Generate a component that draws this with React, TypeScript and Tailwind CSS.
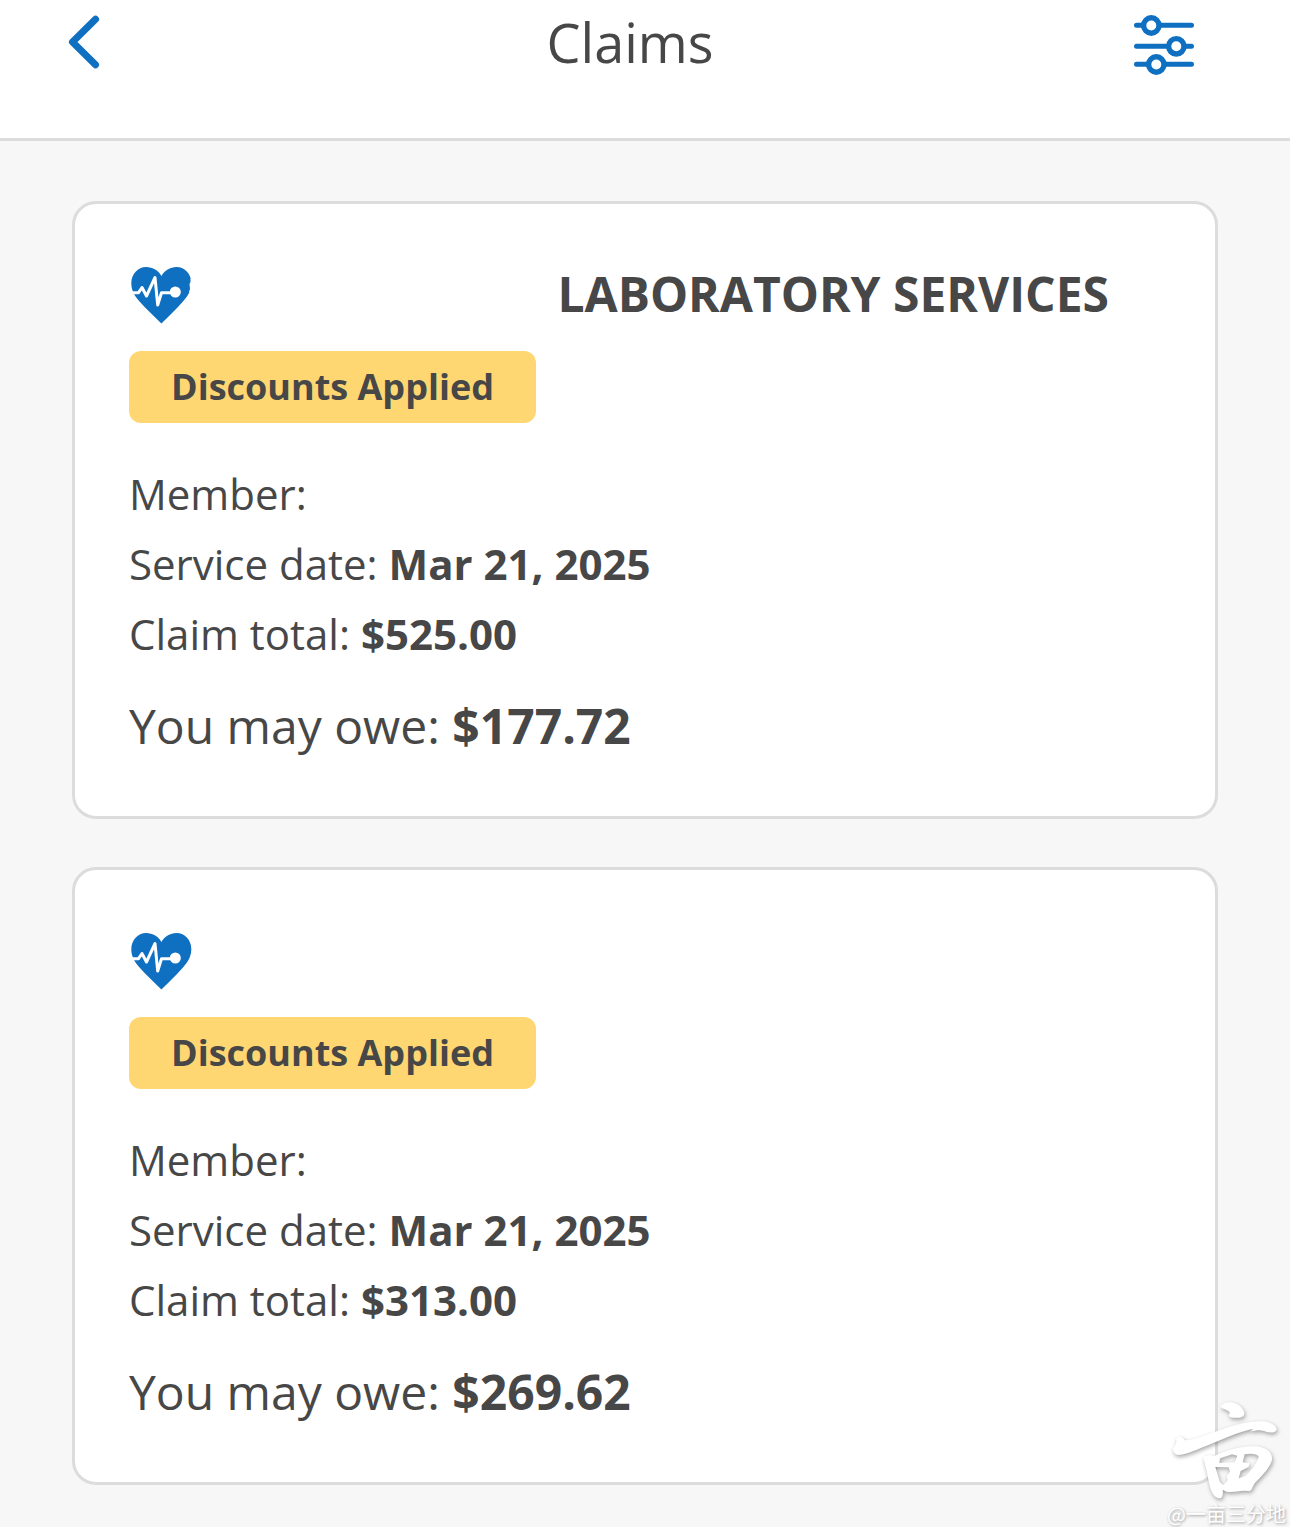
import * as React from "react";

type Claim = {
  id: string;
  title: string;
  serviceDate: string;
  total: string;
  owed: string;
  chipped?: boolean;
};

const CLAIMS: Claim[] = [
  { id: "lab", title: "LABORATORY SERVICES", serviceDate: "Mar 21, 2025", total: "$525.00", owed: "$177.72", chipped: true },
  { id: "other", title: "", serviceDate: "Mar 21, 2025", total: "$313.00", owed: "$269.62" },
];

function BackIcon() {
  return (
    <svg className="w-[60px] h-[66px]" viewBox="0 0 60 66" fill="none" aria-hidden="true">
      <path d="M29.5 10.3L6.5 33L29.5 55.7" stroke="#0f6fc0" strokeWidth="7" strokeLinecap="round" strokeLinejoin="round" />
    </svg>
  );
}

function FilterIcon() {
  return (
    <svg className="w-[60px] h-[66px]" viewBox="0 0 60 66" fill="none" stroke="#0f6fc0" aria-hidden="true">
      <path d="M2.5 16.3H57.5M2.5 37.3H57.5M2.5 55.3H57.5" strokeWidth="5" strokeLinecap="round" />
      <g fill="#fff" strokeWidth="5.4">
        <circle cx="17.3" cy="16.5" r="7.7" />
        <circle cx="42.3" cy="37.3" r="7.7" />
        <circle cx="22.3" cy="55.5" r="7.7" />
      </g>
    </svg>
  );
}

function HeartIcon({ chipped }: { chipped?: boolean }) {
  return (
    <svg className="w-[64px] h-[60px] shrink-0" viewBox="0 0 64 60" fill="none" aria-hidden="true">
      <path
        d="M32.4 59.5C25 52 17 45 11 38C5 31.5 2.3 26 2.3 19C2.3 10 9 3 17 3C24 3 29.5 6.5 32.4 12C35.5 6.5 41 3 47.5 3C56 3 62.3 10 62.3 19C62.3 26 59.500 31.5 53.5 38C47.5 45 40 52 32.4 59.5Z"
        fill="#0f6fc0"
      />
      <path d="M3 28.7H9.5L13 23.5L17.5 32L26 13.5L28.7 41L32.5 28.7H42" stroke="#fff" strokeWidth="3" strokeLinejoin="round" />
      <circle cx="46.3" cy="28" r="5.5" fill="#fff" />
      {chipped && <path d="M64 15H61.5V18L60.5 20L61 25L60 28H64Z" fill="#fff" />}
    </svg>
  );
}

function Row({ label, value }: { label: string; value?: string }) {
  return (
    <p className="text-[42px] leading-[70px]">
      {label} {value && <strong className="font-bold">{value}</strong>}
    </p>
  );
}

function ClaimCard({ claim }: { claim: Claim }) {
  return (
    <article className="rounded-3xl border-3 border-[#dcdcdc] bg-white px-[54px] py-[57px]">
      <div className="flex items-center justify-between min-h-[66px] mb-6 pr-[52px]">
        <HeartIcon chipped={claim.chipped} />
        {claim.title && <h2 className="text-[48px] leading-[66px] font-bold">{claim.title}</h2>}
      </div>
      <span className="inline-block align-top rounded-xl bg-[#fed773] px-[42px] text-[36px] leading-[72px] font-bold">
        Discounts Applied
      </span>
      <div className="mt-9">
        <Row label="Member:" />
        <Row label="Service date:" value={claim.serviceDate} />
        <Row label="Claim total:" value={claim.total} />
      </div>
      <p className="mt-6 text-[48px] leading-[66px]">
        You may owe: <strong className="font-bold">{claim.owed}</strong>
      </p>
    </article>
  );
}

// brush-style mark that sits above the watermark handle
function BrushMark() {
  return (
    <svg
      className="w-[108px] h-[104px] overflow-visible [filter:drop-shadow(1px_2px_2px_rgb(0_0_0/0.35))]"
      viewBox="42 6 324 312"
      fill="#fff"
      aria-hidden="true"
    >
      <path d="M180 35C190 24 202 20 216 22C236 26 250 40 253 54C254 66 240 70 222 68C208 67 202 62 210 54C206 44 192 44 180 35Z" />
      <path d="M48 130C56 122 70 124 73 136C105 136 150 114 200 98C245 84 290 76 318 80C338 84 350 94 350 104C346 114 330 114 318 110C304 104 290 104 270 110L280 101C240 108 180 136 130 156C100 168 74 180 54 180C42 178 38 168 40 158C46 148 52 142 48 130Z" />
      <path
        fillRule="evenodd"
        d="M130 190C134 180 150 178 162 184C200 164 250 152 290 154C322 158 338 174 336 194C332 216 306 242 288 260C274 274 280 288 264 288C240 284 222 294 200 290L188 284C190 298 188 310 178 310C164 308 156 296 150 276C144 250 138 214 130 190ZM180 190L216 178L232 182L224 202L178 204ZM166 216L206 217L210 230L200 244L203 256L190 270L180 262ZM254 178C272 174 290 176 296 184C294 200 276 224 258 242L236 250L242 228L266 216L268 204L248 202Z"
      />
    </svg>
  );
}

function Watermark() {
  return (
    <div className="absolute right-1 bottom-0 flex flex-col items-end text-white pointer-events-none">
      <div className="mr-1">
        <BrushMark />
      </div>
      <span className="text-[20px] leading-[26px] [text-shadow:1px_1px_3px_rgb(0_0_0/0.4)] font-['Noto_Sans_CJK_SC',sans-serif]">
        @一亩三分地
      </span>
    </div>
  );
}

export default function App() {
  return (
    <div className="relative min-h-screen bg-[#f7f7f7] text-[#474747] font-['Open_Sans',sans-serif]">
      <header className="bg-white border-b-3 border-[#dcdcdc] pb-[54px]">
        <div className="flex items-center justify-between pl-[66px] pr-24">
          <button type="button" aria-label="Back">
            <BackIcon />
          </button>
          <h1 className="text-[54px] leading-[84px]">Claims</h1>
          <button type="button" aria-label="Filter claims">
            <FilterIcon />
          </button>
        </div>
      </header>
      <main className="flex flex-col gap-12 px-[72px] pt-[60px] pb-[42px]">
        {CLAIMS.map(c => <ClaimCard key={c.id} claim={c} />)}
      </main>
      <Watermark />
    </div>
  );
}
